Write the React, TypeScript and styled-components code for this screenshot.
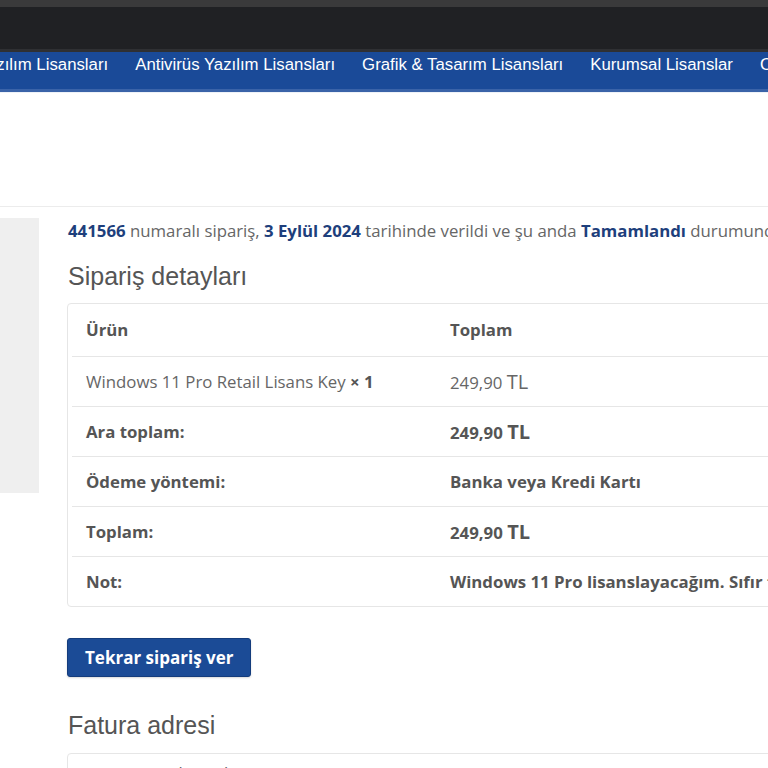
import styled, { createGlobalStyle } from 'styled-components';

const GlobalStyle = createGlobalStyle`
  html, body {
    margin: 0;
    padding: 0;
    background: #fff;
    overflow: hidden;
  }
  * {
    box-sizing: border-box;
  }
`;

type Row = {
  label: string;
  value: React.ReactNode;
  strong?: boolean;
};

const navItems = [
  'Yazılım Lisansları',
  'Antivirüs Yazılım Lisansları',
  'Grafik & Tasarım Lisansları',
  'Kurumsal Lisanslar',
  'Oyun Lisansları',
];

const Price = ({ amount }: { amount: string }) => (
  <>
    {amount} <Currency>TL</Currency>
  </>
);

const rows: Row[] = [
  { label: 'Ara toplam:', value: <Price amount="249,90" />, strong: true },
  { label: 'Ödeme yöntemi:', value: 'Banka veya Kredi Kartı', strong: true },
  { label: 'Toplam:', value: <Price amount="249,90" />, strong: true },
  {
    label: 'Not:',
    value: 'Windows 11 Pro lisanslayacağım. Sıfır format attım, lisans anahtarını bekliyorum.',
    strong: true,
  },
];

const App = () => {
  return (
    <Page>
      <GlobalStyle />
      <TopStrip />
      <DarkBar />
      <Nav>
        <NavList>
          {navItems.map((item) => (
            <NavItem key={item}>{item}</NavItem>
          ))}
        </NavList>
      </Nav>
      <HeaderSpace />
      <Main>
        <Sidebar />
        <Content>
          <Notice>
            <Mark>441566</Mark> numaralı sipariş, <Mark>3 Eylül 2024</Mark> tarihinde verildi ve şu
            anda <Mark>Tamamlandı</Mark> durumunda.
          </Notice>

          <SectionTitle>Sipariş detayları</SectionTitle>
          <TableBox>
            <Table>
              <colgroup>
                <col style={{ width: 364 }} />
                <col />
              </colgroup>
              <thead>
                <tr>
                  <HeadCell>Ürün</HeadCell>
                  <HeadCell>Toplam</HeadCell>
                </tr>
              </thead>
              <tbody>
                <tr>
                  <Cell>
                    Windows 11 Pro Retail Lisans Key <Bold>× 1</Bold>
                  </Cell>
                  <Cell>
                    <Price amount="249,90" />
                  </Cell>
                </tr>
                {rows.map((row) => (
                  <tr key={row.label}>
                    <Cell $strong>{row.label}</Cell>
                    <Cell $strong={row.strong}>{row.value}</Cell>
                  </tr>
                ))}
              </tbody>
            </Table>
          </TableBox>

          <OrderAgain type="button">Tekrar sipariş ver</OrderAgain>

          <SectionTitle $spaced>Fatura adresi</SectionTitle>
          <AddressBox>
            <AddressLine>MEHMET ALİ DEMİRHAN</AddressLine>
            <AddressLine>İstanbul</AddressLine>
          </AddressBox>
        </Content>
      </Main>
    </Page>
  );
};

export default App;

const Page = styled.div`
  width: 768px;
  height: 768px;
  overflow: hidden;
  font-family: 'Open Sans', 'Noto Sans', sans-serif;
`;

const TopStrip = styled.div`
  height: 7px;
  background: #3a3a3b;
`;

const DarkBar = styled.div`
  height: 45px;
  background: #202124;
  border-bottom: 3px solid #2f3033;
`;

const Nav = styled.nav`
  height: 40px;
  background: #1a4a98;
  border-bottom: 3px solid #3a63a8;
  overflow: hidden;
`;

const NavList = styled.ul`
  display: flex;
  gap: 27px;
  margin: 0 0 0 -23px;
  padding: 0 0 11px;
  list-style: none;
  height: 100%;
  align-items: center;
`;

const NavItem = styled.li`
  flex-shrink: 0;
  color: #fff;
  font-family: 'Liberation Sans', Arial, sans-serif;
  font-size: 16.8px;
  white-space: nowrap;
`;

const HeaderSpace = styled.div`
  height: 115px;
  border-top: 1px solid #eef2f8;
  border-bottom: 1px solid #ececec;
`;

const Main = styled.main`
  display: flex;
  gap: 29px;
  padding-top: 11px;
  width: 1100px;
`;

const Sidebar = styled.aside`
  flex: 0 0 39px;
  height: 275px;
  background: #efefef;
`;

const Content = styled.section`
  width: 760px;
  flex-shrink: 0;
`;

const Notice = styled.p`
  margin: 0;
  font-size: 16.8px;
  line-height: 25px;
  color: #666;
  white-space: nowrap;
`;

const Mark = styled.strong`
  color: #1e3f7c;
  font-weight: 700;
`;

const SectionTitle = styled.h2<{ $spaced?: boolean }>`
  margin: ${({ $spaced }) => ($spaced ? '34px 0 13px' : '19px 0 12px')};
  font-family: 'Liberation Sans', Arial, sans-serif;
  font-size: 25px;
  line-height: 29px;
  font-weight: 400;
  color: #555;
`;

const TableBox = styled.div`
  margin-left: -1px;
  border: 1px solid #e6e6e6;
  border-radius: 4px;
  padding: 0 4px;
`;

const Table = styled.table`
  width: 100%;
  border-collapse: collapse;
  table-layout: fixed;

  tr + tr td,
  tbody tr:first-child td {
    border-top: 1px solid #e6e6e6;
  }
`;

const HeadCell = styled.th`
  height: 52px;
  padding: 0 14px;
  text-align: left;
  font-size: 16.8px;
  font-weight: 700;
  color: #555;
`;

const Cell = styled.td<{ $strong?: boolean }>`
  height: 50px;
  padding: 0 14px;
  font-size: 16.8px;
  white-space: nowrap;
  overflow: hidden;
  font-weight: ${({ $strong }) => ($strong ? 700 : 400)};
  color: ${({ $strong }) => ($strong ? '#555' : '#666')};
`;

const Bold = styled.strong`
  font-weight: 700;
  color: #555;
`;

const Currency = styled.span`
  font-size: 20px;
`;

const OrderAgain = styled.button`
  display: block;
  margin-top: 31px;
  margin-left: -1px;
  height: 39px;
  padding: 0 17px;
  background: #1b4b96;
  border: 1px solid #143c7c;
  border-radius: 3px;
  box-shadow: 0 1px 2px rgba(0, 0, 0, 0.15);
  color: #fff;
  font-family: 'Open Sans', 'Noto Sans', sans-serif;
  font-size: 17px;
  font-weight: 700;
  cursor: pointer;
`;

const AddressBox = styled.address`
  margin-left: -1px;
  border: 1px solid #e6e6e6;
  border-radius: 4px;
  padding: 10px 16px;
  font-style: normal;
`;

const AddressLine = styled.div`
  font-size: 16.8px;
  line-height: 24px;
  color: #555;
`;
